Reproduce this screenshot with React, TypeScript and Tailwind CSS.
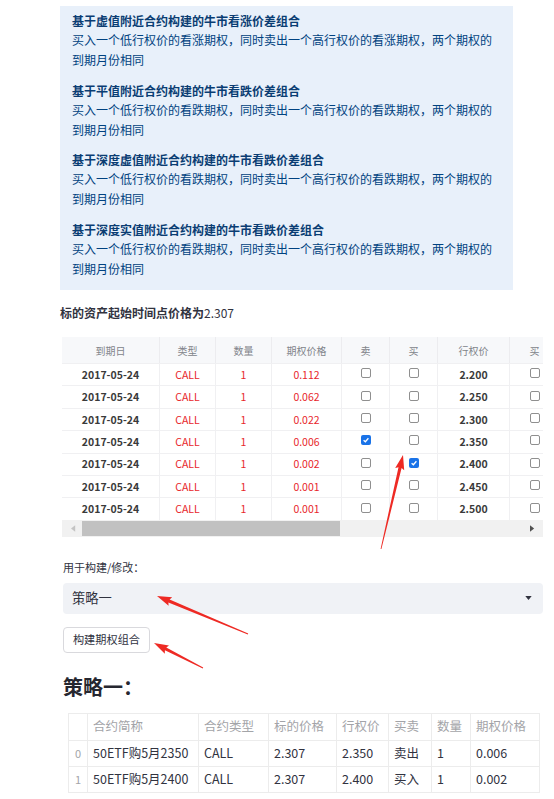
import React from 'react';

const strategies = [
  { title: '基于虚值附近合约构建的牛市看涨价差组合', kind: '看涨' },
  { title: '基于平值附近合约构建的牛市看跌价差组合', kind: '看跌' },
  { title: '基于深度虚值附近合约构建的牛市看跌价差组合', kind: '看跌' },
  { title: '基于深度实值附近合约构建的牛市看跌价差组合', kind: '看跌' },
];

const optionRows = [
  { price: '0.112', strike: '2.200', sell: false, buy: false },
  { price: '0.062', strike: '2.250', sell: false, buy: false },
  { price: '0.022', strike: '2.300', sell: false, buy: false },
  { price: '0.006', strike: '2.350', sell: true, buy: false },
  { price: '0.002', strike: '2.400', sell: false, buy: true },
  { price: '0.001', strike: '2.450', sell: false, buy: false },
  { price: '0.001', strike: '2.500', sell: false, buy: false },
];

const resultRows = [
  ['0', '50ETF购5月2350', 'CALL', '2.307', '2.350', '卖出', '1', '0.006'],
  ['1', '50ETF购5月2400', 'CALL', '2.307', '2.400', '买入', '1', '0.002'],
];

const Checkbox = ({ checked }: { checked: boolean }) =>
  checked ? (
    <span className="flex h-[10px] w-[10px] items-center justify-center rounded-[2px] bg-[#1a73e8]">
      <svg viewBox="0 0 10 10" className="h-[8px] w-[8px]">
        <path d="M2 5.2 L4.2 7.2 L8 2.8" fill="none" stroke="white" strokeWidth="1.6" />
      </svg>
    </span>
  ) : (
    <span className="h-[10px] w-[10px] rounded-[2px] border border-[#8f8f8f] bg-white" />
  );

// tapered annotation arrow, tail -> tip
const Arrow = ({ x1, y1, x2, y2 }: { x1: number; y1: number; x2: number; y2: number }) => {
  const dx = x2 - x1;
  const dy = y2 - y1;
  const len = Math.hypot(dx, dy);
  const ux = dx / len;
  const uy = dy / len;
  const nx = -uy;
  const ny = ux;
  const head = 13;
  const bx = x2 - ux * head;
  const by = y2 - uy * head;
  const p = (x: number, y: number) => `${x.toFixed(1)},${y.toFixed(1)}`;
  const pts = [
    p(x1 + nx * 0.4, y1 + ny * 0.4),
    p(bx + nx * 1.6, by + ny * 1.6),
    p(bx - ux * 1.5 + nx * 4.6, by - uy * 1.5 + ny * 4.6),
    p(x2, y2),
    p(bx - ux * 1.5 - nx * 4.6, by - uy * 1.5 - ny * 4.6),
    p(bx - nx * 1.6, by - ny * 1.6),
    p(x1 - nx * 0.4, y1 - ny * 0.4),
  ].join(' ');
  return <polygon points={pts} fill="#ee2a24" />;
};

export default function App() {
  const topCols = ['w-[98px]', 'w-[56px]', 'w-[56px]', 'w-[70px]', 'w-[48px]', 'w-[48px]', 'w-[72px]', 'w-[50px]'];
  const topHead = ['到期日', '类型', '数量', '期权价格', '卖', '买', '行权价', '买'];
  const botCols = ['w-[19px]', 'w-[111px]', 'w-[70px]', 'w-[68px]', 'w-[52px]', 'w-[43px]', 'w-[39px]', 'w-[68px]'];
  const botHead = ['', '合约简称', '合约类型', '标的价格', '行权价', '买卖', '数量', '期权价格'];

  return (
    <div className="relative min-h-[799px] w-[554px] overflow-hidden bg-white font-['Noto_Sans_CJK_SC','Noto_Sans',sans-serif] text-[#31333f]">
      <div className="flex flex-col items-start pl-[60px] pt-[6px]">
        {/* info box */}
        <div className="flex w-[453px] flex-col gap-[11.5px] bg-[#e8f0fa] px-[12px] pb-[11.5px] pt-[6px] text-[#004280]">
          {strategies.map((s) => (
            <div key={s.title}>
              <div className="text-[12px] font-bold leading-[18px] text-[#0a3d73]">{s.title}</div>
              <div className="text-[12px] leading-[20px]">
                {`买入一个低行权价的${s.kind}期权，同时卖出一个高行权价的${s.kind}期权，两个期权的到期月份相同`}
              </div>
            </div>
          ))}
        </div>

        <div className="mt-[14px] text-[12px] leading-[18px]">
          <span className="font-bold">标的资产起始时间点价格为</span>
          <span>2.307</span>
        </div>

        {/* editable grid */}
        <div className="ml-[2px] mt-[15px] w-[481px] overflow-hidden">
          <div className="flex h-[26px] w-max bg-[#f7f8fa]">
            {topHead.map((h, i) => (
              <div
                key={i}
                className={`${topCols[i]} flex items-center justify-center border-r border-[#ececef] text-[10px] text-[#81848a]`}
              >
                {h}
              </div>
            ))}
          </div>
          {optionRows.map((r, ri) => (
            <div key={ri} className="flex h-[22.4px] w-max border-t border-[#f0f0f2] text-[10.5px]">
              <div className={`${topCols[0]} flex items-center justify-center border-r border-[#f0f0f2] font-semibold text-[#3a3a3a]`}>2017-05-24</div>
              <div className={`${topCols[1]} flex items-center justify-center border-r border-[#f0f0f2] text-[#e8262b]`}>CALL</div>
              <div className={`${topCols[2]} flex items-center justify-center border-r border-[#f0f0f2] text-[#e8262b]`}>1</div>
              <div className={`${topCols[3]} flex items-center justify-center border-r border-[#f0f0f2] text-[#e8262b]`}>{r.price}</div>
              <div className={`${topCols[4]} flex items-center justify-center border-r border-[#f0f0f2] pb-[3px]`}>
                <Checkbox checked={r.sell} />
              </div>
              <div className={`${topCols[5]} flex items-center justify-center border-r border-[#f0f0f2] pb-[3px]`}>
                <Checkbox checked={r.buy} />
              </div>
              <div className={`${topCols[6]} flex items-center justify-center border-r border-[#f0f0f2] font-semibold text-[#3a3a3a]`}>{r.strike}</div>
              <div className={`${topCols[7]} flex items-center justify-center pb-[3px]`}>
                <Checkbox checked={false} />
              </div>
            </div>
          ))}
          <div className="flex h-[17px] items-center bg-[#f1f1f1]">
            <svg viewBox="0 0 6 8" className="ml-[9px] h-[7px] w-[5px]">
              <path d="M5 0 L0 4 L5 8 Z" fill="#c4c4c4" />
            </svg>
            <div className="ml-[6px] h-[15px] w-[258px] bg-[#c1c1c1]" />
            <svg viewBox="0 0 6 8" className="ml-auto mr-[8px] h-[7px] w-[5px]">
              <path d="M0 0 L5 4 L0 8 Z" fill="#505050" />
            </svg>
          </div>
        </div>

        <div className="ml-[3px] mt-[22px] text-[11px] leading-[16px]">用于构建/修改：</div>

        <div className="ml-[3px] mt-[8px] flex h-[31px] w-[480px] items-center justify-between rounded-[4px] bg-[#f0f2f6] pl-[9px] pr-[11px]">
          <span className="text-[13.3px]">策略一</span>
          <svg viewBox="0 0 8 5" className="h-[4px] w-[7px]">
            <path d="M0 0 L8 0 L4 5 Z" fill="#31333f" />
          </svg>
        </div>

        <button className="ml-[3px] mt-[13px] flex h-[26px] w-[87px] items-center justify-center rounded-[4px] border border-[#d9d9dd] bg-white text-[11.2px] text-[#31333f]">
          构建期权组合
        </button>

        <h2 className="ml-[3px] mt-[20px] text-[20px] font-bold leading-[28px] text-[#262730]">策略一：</h2>

        {/* dataframe */}
        <div className="ml-[8px] mt-[12px] border border-[#ececec] text-[12.5px]">
          <div className="flex h-[26px]">
            {botHead.map((h, i) => (
              <div
                key={i}
                className={`${botCols[i]} flex items-center border-r border-[#ececec] pl-[5px] text-[#a3a4a8] last:border-r-0`}
              >
                {h}
              </div>
            ))}
          </div>
          {resultRows.map((row) => (
            <div key={row[0]} className="flex h-[26px] border-t border-[#ececec]">
              {row.map((c, i) => (
                <div
                  key={i}
                  className={`${botCols[i]} flex items-center border-r border-[#ececec] last:border-r-0 ${
                    i === 0 ? 'justify-center text-[11px] text-[#a3a4a8]' : 'pl-[5px]'
                  }`}
                >
                  {c}
                </div>
              ))}
            </div>
          ))}
        </div>
      </div>

      {/* red annotation arrows */}
      <svg className="pointer-events-none absolute left-0 top-0" width="554" height="799">
        <Arrow x1={381} y1={549} x2={403} y2={455} />
        <Arrow x1={248} y1={634} x2={157} y2={596} />
        <Arrow x1={203} y1={668} x2={154} y2={643} />
      </svg>
    </div>
  );
}
